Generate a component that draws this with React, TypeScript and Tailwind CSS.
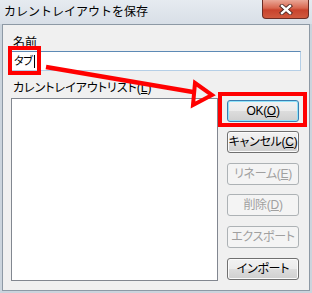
import React from "react";

const jp = "font-['Liberation_Sans','Noto_Sans_CJK_JP',sans-serif]";

// Windows 7 のボタン風
function WinButton({
  children,
  variant = "normal",
  className = "",
}: {
  children: React.ReactNode;
  variant?: "normal" | "default" | "disabled";
  className?: string;
}) {
  const look =
    variant === "disabled"
      ? "border-[#adb2b5] bg-[#f4f4f4] text-[#a0a0a0]"
      : variant === "default"
      ? "border-[#3c7fb1] bg-[linear-gradient(#f2f2f2_0%,#ebebeb_50%,#dddddd_50%,#cfcfcf_100%)] shadow-[inset_0_0_0_1px_#8fe3fa] text-black"
      : "border-[#707070] bg-[linear-gradient(#f2f2f2_0%,#ebebeb_50%,#dddddd_50%,#cfcfcf_100%)] shadow-[inset_0_0_0_1px_#fbfbfb] text-black";
  return (
    <div
      className={`flex h-[22px] w-[72px] items-center justify-center whitespace-nowrap rounded-[3px] border text-[12px] leading-none tracking-[-0.3px] ${look} ${className}`}
    >
      {children}
    </div>
  );
}

function Key({ k }: { k: string }) {
  return (
    <>
      (<span className="underline underline-offset-1">{k}</span>)
    </>
  );
}

export default function App() {
  return (
    <div
      className={`relative flex h-[293px] w-[312px] flex-col overflow-hidden bg-[#cbd4dd] ${jp}`}
    >
      {/* タイトルバー */}
      <div className="flex h-[24px] shrink-0 items-start justify-between bg-[linear-gradient(#e6ebf0,#d8dfe7)] pl-[4px] pr-[3px]">
        <div className="flex h-[24px] items-center text-[12px] text-black">
          カレントレイアウトを保存
        </div>
        <div className="flex h-[19px] w-[47px] items-center justify-center rounded-b-[4px] border border-t-0 border-[#6b2d25] bg-[linear-gradient(#eaa797_0%,#d8664f_45%,#c8432d_55%,#d05a3f_100%)]">
          <svg width="14" height="11" viewBox="0 0 14 11">
            <path
              d="M3 2 L11 9 M11 2 L3 9"
              stroke="#4a2520"
              strokeWidth="4.2"
              strokeLinecap="square"
              fill="none"
            />
            <path
              d="M3 2 L11 9 M11 2 L3 9"
              stroke="#ffffff"
              strokeWidth="2.4"
              strokeLinecap="square"
              fill="none"
            />
          </svg>
        </div>
      </div>

      {/* クライアント領域 */}
      <div className="mx-[2px] flex h-[267px] shrink-0 flex-col border border-[#8d99a5] bg-[#f0f0f0] pl-[8px] pt-[11px] [font-feature-settings:'palt']">
        <div className="pl-[2px] text-[12px] leading-[14px] text-black">名前</div>
        <div className="mt-[1px] flex h-[20px] w-[290px] items-center border border-[#b5cfe7] border-t-[#5d8ab5] bg-white pl-[2px] text-[11px] tracking-[-0.5px] text-black">
          タブ
          <span className="ml-[2px] h-[13px] w-px bg-black" />
        </div>
        <div className="mt-[10px] pl-[2px] text-[12px] leading-[14px] text-black">
          カレントレイアウトリスト<Key k="L" />
        </div>
        <div className="mt-[3px] flex">
          <div className="h-[183px] w-[207px] border border-[#828790] bg-white" />
          <div className="ml-[9px] flex flex-col pt-[2px]">
            <WinButton variant="default">
              OK<Key k="O" />
            </WinButton>
            <WinButton className="mt-[9px]">
              キャンセル<Key k="C" />
            </WinButton>
            <WinButton variant="disabled" className="mt-[10px]">
              リネーム<Key k="E" />
            </WinButton>
            <WinButton variant="disabled" className="mt-[9px]">
              削除<Key k="D" />
            </WinButton>
            <WinButton variant="disabled" className="mt-[10px]">
              エクスポート
            </WinButton>
            <WinButton className="mt-[10px]">インポート</WinButton>
          </div>
        </div>
      </div>

      {/* 注釈（赤枠と矢印） */}
      <div className="pointer-events-none absolute left-[8px] top-[46px] h-[29px] w-[33px] border-[4px] border-[#ff0000]" />
      <div className="pointer-events-none absolute left-[218px] top-[92px] h-[35px] w-[89px] border-[4px] border-[#ff0000]" />
      <svg
        className="pointer-events-none absolute left-0 top-0"
        width="312"
        height="293"
        viewBox="0 0 312 293"
      >
        <line x1="46" y1="67" x2="193" y2="92" stroke="#ff0000" strokeWidth="4.5" />
        <polygon
          points="195,83 212,95 193,105"
          fill="none"
          stroke="#ff0000"
          strokeWidth="4"
          strokeLinejoin="miter"
        />
      </svg>
    </div>
  );
}
